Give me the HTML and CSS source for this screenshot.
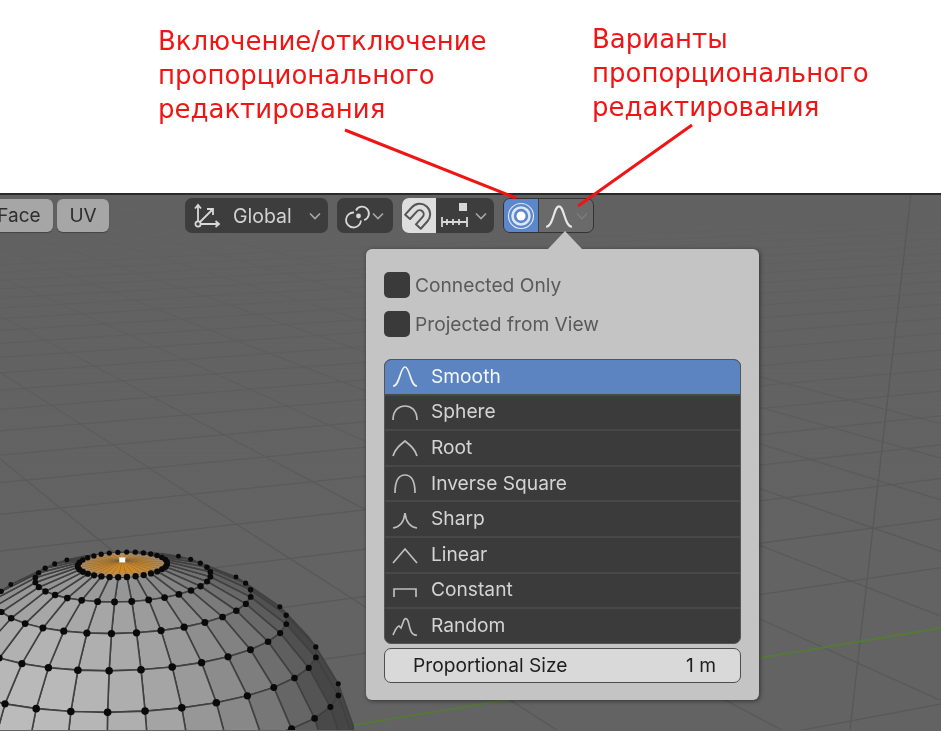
FILE: index.html
```html
<!DOCTYPE html>
<html lang="ru">
<head>
    <meta charset="UTF-8">
    <meta name="viewport" content="width=device-width, initial-scale=1.0">
    <title>Пропорциональное редактирование</title>
    <link rel="stylesheet" href="styles.css">
</head>
<body>

<div class="notes">
    <p class="note note-left">Включение/отключение<br>пропорционального<br>редактирования</p>
    <p class="note note-right">Варианты<br>пропорционального<br>редактирования</p>
</div>

<div class="viewport">
    <svg class="scene" id="scene" viewBox="0 194 941 537"></svg>

    <div class="toolbar">
        <button class="btn-light btn-face">Face</button>
        <button class="btn-light btn-uv">UV</button>

        <div class="drop drop-global">
            <svg class="ico" width="28" height="28" viewBox="0 0 28 28">
                <circle cx="5" cy="22" r="2.6"/>
                <path d="M5 19V3M2 6.500L5 3l3 3.500M8 22h18M22.500 19l3.500 3-3.500 3M7 20L20 7M14 7h6v6"/>
            </svg>
            <span class="drop-text">Global</span>
            <svg class="chev" width="12" height="8" viewBox="0 0 12 8"><path d="M1 1.500l5 5 5-5"/></svg>
        </div>

        <div class="drop drop-link">
            <svg class="ico" width="28" height="28" viewBox="0 0 28 28">
                <path d="M10 10.500a7.500 7.500 0 1 0 7 8M12 8.500a6.800 6.800 0 1 1 8 9.500"/>
                <circle class="solid" cx="14.500" cy="14" r="2.400"/>
            </svg>
            <svg class="chev" width="12" height="8" viewBox="0 0 12 8"><path d="M1 1.500l5 5 5-5"/></svg>
        </div>

        <div class="group-snap">
            <span class="snap-on">
                <svg class="ico-dark" width="30" height="30" viewBox="0 0 30 30">
                    <path transform="rotate(42 15 14)" d="M4.500 23V13a10.500 10.500 0 0 1 21 0v10h-6.500V13a4 4 0 0 0-8 0v10z"/>
                </svg>
            </span>
            <div class="snap-rest">
                <svg class="ico" width="30" height="28" viewBox="0 0 30 28">
                    <path d="M1 15v10M1 20h25M6 17v6M12 17v6M18 17v6M26 15v10"/>
                    <rect class="solid" x="18" y="1" width="8" height="8"/>
                </svg>
                <svg class="chev" width="12" height="8" viewBox="0 0 12 8"><path d="M1 1.500l5 5 5-5"/></svg>
            </div>
        </div>

        <div class="group-prop">
            <span class="prop-on">
                <svg width="30" height="30" viewBox="0 0 30 30">
                    <circle class="ring-thin" cx="15" cy="15" r="12.500"/>
                    <circle class="ring-thick" cx="15" cy="15" r="8.500"/>
                    <circle class="ring-dot" cx="15" cy="15" r="4.500"/>
                </svg>
            </span>
            <div class="prop-rest">
                <svg class="ico ico-curve" width="28" height="26" viewBox="0 0 26 24"><path d="M1 22C8 22 8 3 13 3s5 19 12 19"/></svg>
                <svg class="chev chev-dim" width="12" height="8" viewBox="0 0 12 8"><path d="M1 1.500l5 5 5-5"/></svg>
            </div>
        </div>
    </div>

    <div class="popover">
        <span class="pop-tip"></span>

        <label class="check"><span class="check-box"></span>Connected Only</label>
        <label class="check"><span class="check-box"></span>Projected from View</label>

        <ul class="falloff">
            <li class="row active"><svg width="26" height="24" viewBox="0 0 26 24"><path d="M1 22C8 22 8 3 13 3s5 19 12 19"/></svg>Smooth</li>
            <li class="row"><svg width="26" height="24" viewBox="0 0 26 24"><path d="M1 21C1 10 8 7 13 7s12 3 12 14"/></svg>Sphere</li>
            <li class="row"><svg width="26" height="24" viewBox="0 0 26 24"><path d="M1 21C3 14 8 10 13 6c5 4 10 8 12 15"/></svg>Root</li>
            <li class="row"><svg width="26" height="24" viewBox="0 0 26 24"><path d="M3 22C3 9 7 4 13 4s10 5 10 18"/></svg>Inverse Square</li>
            <li class="row"><svg width="26" height="24" viewBox="0 0 26 24"><path d="M1 22c7-1 11-6 12-15 1 9 5 14 12 15"/></svg>Sharp</li>
            <li class="row"><svg width="26" height="24" viewBox="0 0 26 24"><path d="M1 21L13 7l12 14"/></svg>Linear</li>
            <li class="row"><svg width="26" height="24" viewBox="0 0 26 24"><path d="M2 20v-8h22v8"/></svg>Constant</li>
            <li class="row"><svg width="26" height="24" viewBox="0 0 26 24"><path d="M1 22c2-4 3-8 6-9l2 2 3-8c1-2 3-2 4 1 2 6 2 15 9 14"/></svg>Random</li>
        </ul>

        <div class="size-field"><span>Proportional Size</span><span>1 m</span></div>
    </div>
</div>

<svg class="arrows" width="941" height="731" viewBox="0 0 941 731">
    <path d="M345 130L516 198M692 125L578 206"/>
</svg>

<script src="canvas.js"></script>
</body>
</html>
```

FILE: styles.css
```css
html, body {
    margin: 0;
    height: 100%;
    overflow: hidden;
    background-color: #FFFFFF;
}
body {
    display: flex;
    flex-direction: column;
    position: relative;
    filter: blur(0.4px); /* the screenshot is a soft upscale */
}

/* red captions above the viewport */
.notes {
    height: 193px;
    flex: none;
    box-sizing: border-box;
    padding: 24px 0 0 158px;
    display: flex;
    font-family: "DejaVu Sans", sans-serif;
    font-size: 26px;
    line-height: 34px;
    color: #F01414;
}
.note {
    margin: 0;
}
.note-left {
    width: 434px;
}
.note-right {
    margin-top: -2px;
}
.arrows {
    position: absolute;
    left: 0;
    top: 0;
    pointer-events: none;
}
.arrows path {
    fill: none;
    stroke: #F01414;
    stroke-width: 3;
}

/* blender viewport */
.viewport {
    flex: 1;
    position: relative;
    overflow: hidden;
    background-color: #636363;
    border-top: 2px solid #2A2A2A;
    font-family: Inter, "Liberation Sans", sans-serif;
    font-size: 19px;
}
.scene {
    position: absolute;
    left: 0;
    top: -2px;
    width: 941px;
    height: 537px;
    filter: blur(0.5px);
}

.toolbar {
    position: relative;
    display: flex;
    align-items: center;
    height: 35px;
    padding-top: 3px;
}
.btn-light {
    height: 33px;
    border: none;
    border-radius: 6px;
    background-color: #A6A6A6;
    color: #2E2E2E;
    font: inherit;
    padding: 0;
    box-shadow: 0 1px 1px rgba(0,0,0,0.3);
}
.btn-face {
    width: 68px;
    margin-left: -15px;
}
.btn-uv {
    width: 52px;
    margin-left: 4px;
    margin-right: 76px;
}
.drop, .group-snap, .group-prop {
    height: 35px;
    border-radius: 7px;
    background-color: #3D3D3D;
    color: #D2D2D2;
    display: flex;
    align-items: center;
    box-sizing: border-box;
}
.drop-global {
    width: 143px;
    padding-left: 8px;
    margin-right: 9px;
}
.drop-text {
    margin-left: 12px;
    font-size: 19.500px;
    width: 76px;
    flex: none;
}
.drop-link {
    width: 56px;
    padding-left: 7px;
    margin-right: 9px;
}
.ico, .chev, .ico-dark {
    fill: none;
    flex: none;
}
.ico {
    stroke: #D8D8D8;
    stroke-width: 1.800;
}
.ico .solid {
    fill: #D8D8D8;
    stroke: none;
}
.ico-dark {
    stroke: #555555;
    stroke-width: 2;
    stroke-linejoin: round;
}
.chev {
    stroke: #A8A8A8;
    stroke-width: 1.600;
}
.chev-dim {
    stroke: #7C7C7C;
}
.group-snap {
    width: 92px;
    margin-right: 9px;
    overflow: hidden;
}
.snap-on {
    width: 34px;
    height: 35px;
    background-color: #DEDEDE;
    display: flex;
    align-items: center;
    justify-content: center;
    flex: none;
}
.snap-rest {
    display: flex;
    align-items: center;
    gap: 4px;
    padding-left: 5px;
}
.group-prop {
    width: 91px;
    overflow: hidden;
    border: 1px solid #333333;
    background-color: #6A6A6A;
}
.prop-on {
    width: 34px;
    height: 100%;
    background-color: #5C87CB;
    display: flex;
    align-items: center;
    justify-content: center;
    flex: none;
    border-right: 1px solid #3E3E3E;
}
.ring-thin, .ring-thick {
    fill: none;
    stroke: #DCE6F6;
}
.ring-thin {
    stroke-width: 1.200;
}
.ring-thick {
    stroke-width: 2.600;
}
.ring-dot {
    fill: #FFFFFF;
}
.prop-rest {
    display: flex;
    align-items: center;
    gap: 3px;
    padding-left: 6px;
}
.ico-curve {
    stroke-width: 2;
    stroke: #E8E8E8;
}

/* popover */
.popover {
    position: absolute;
    left: 366px;
    top: 54px;
    width: 393px;
    height: 451px;
    box-sizing: border-box;
    padding: 23px 18px 0;
    background-color: #C4C4C4;
    border-radius: 6px;
    box-shadow: 1px 1px 4px rgba(0,0,0,0.5);
}
.pop-tip {
    position: absolute;
    left: 182px;
    top: -18px;
    border-left: 17px solid transparent;
    border-right: 17px solid transparent;
    border-bottom: 18px solid #C4C4C4;
}
.check {
    display: flex;
    align-items: center;
    gap: 5px;
    height: 26px;
    margin-bottom: 13px;
    color: #5A5A5A;
    font-size: 19.200px;
}
.check-box {
    width: 26px;
    height: 26px;
    border-radius: 5px;
    background-color: #3A3A3A;
}
.falloff {
    list-style: none;
    margin: 22px 0 0;
    padding: 0;
    border-radius: 7px;
    overflow: hidden;
    background-color: #3B3B3B;
    border: 1px solid #555555;
}
.row {
    box-sizing: border-box;
    height: 35.600px;
    padding: 0 0 2px 7px;
    display: flex;
    align-items: center;
    gap: 13px;
    color: #D4D4D4;
    font-size: 19.200px;
    border-top: 2px solid #484848;
}
.row svg {
    fill: none;
    stroke: #BEBEBE;
    stroke-width: 1.700;
    flex: none;
}
.row.active {
    height: 33.600px;
    background-color: #5B84C1;
    color: #F4F7FC;
    border-top: none;
}
.row.active svg {
    stroke: #F0F0F0;
}
.size-field {
    margin-top: 4px;
    height: 33px;
    display: flex;
    align-items: center;
    justify-content: space-between;
    padding: 0 24px 0 28px;
    border: 1px solid #4E4E4E;
    border-radius: 7px;
    background-color: #D9D9D9;
    color: #1E1E1E;
    font-size: 19.200px;
}
```

FILE: canvas.js
```js
// ground grid and the uv sphere of the viewport, drawn into the svg
const scene = document.getElementById('scene');
const NS = 'http://www.w3.org/2000/svg';

function add(tag, attrs) {
    const el = document.createElementNS(NS, tag);
    for (const key in attrs) el.setAttribute(key, attrs[key]);
    scene.appendChild(el);
    return el;
}

function lineThrough(vx, vy, x, y, color) {
    // long line from the vanishing point through x,y
    const ex = x + (x - vx) * 3;
    const ey = y + (y - vy) * 3;
    add('line', { x1: vx, y1: vy, x2: ex, y2: ey, stroke: color, 'stroke-width': 1.3 });
}

function drawGrid() {
    const grid = '#595959';
    // lines running to the right
    for (let k = -2; k < 22; k++) {
        if (k === 0) continue;
        lineThrough(4400, 55, 760, 55 + 1 / (0.001656 + 0.000194 * k), grid);
    }
    // lines running to the lower right
    for (let k = -8; k < 6; k++) {
        lineThrough(-495, 55, 760 + 188 * k, 620, grid);
    }

    // the grid fades out towards the horizon
    const defs = add('defs', {});
    const fade = document.createElementNS(NS, 'linearGradient');
    fade.id = 'fade';
    fade.setAttribute('x1', 0);
    fade.setAttribute('y1', 0);
    fade.setAttribute('x2', 0);
    fade.setAttribute('y2', 1);
    fade.innerHTML = '<stop offset="0" stop-color="#616161" stop-opacity="0.95"/><stop offset="1" stop-color="#636363" stop-opacity="0"/>';
    defs.appendChild(fade);
    add('rect', { x: 0, y: 194, width: 941, height: 340, fill: 'url(#fade)' });

    add('line', { x1: 911, y1: 194, x2: 850, y2: 731, stroke: '#585858', 'stroke-width': 1.3 });
    add('line', { x1: 300, y1: 735, x2: 941, y2: 629, stroke: '#557A38', 'stroke-width': 1.8 });
}

function drawSphere() {
    const R = 230, cx = 130, cy = 782;
    const sinT = 0.28, cosT = 0.96;
    const rollS = 0.035, rollC = 0.999; // the pole leans a little to the left
    const rings = 16, segs = 32;
    const off = 6 * Math.PI / 180;

    function vert(i, j) {
        const th = i * Math.PI / rings;
        const ph = j * 2 * Math.PI / segs + off;
        const nx = Math.sin(th) * Math.cos(ph);
        const ny = Math.cos(th);
        const nz = Math.sin(th) * Math.sin(ph);
        const up = ny * cosT - nz * sinT;
        const view = ny * sinT + nz * cosT;
        return {
            x: cx + R * (nx * rollC - up * rollS),
            y: cy - R * (up * rollC + nx * rollS),
            nx: nx, up: up, view: view
        };
    }

    const L = [-0.45, 0.25, 0.86];
    for (let i = 0; i < 8; i++) {
        for (let j = 0; j < segs; j++) {
            const a = vert(i, j), b = vert(i, j + 1), c = vert(i + 1, j + 1), d = vert(i + 1, j);
            const nx = (a.nx + b.nx + c.nx + d.nx) / 4;
            const up = (a.up + b.up + c.up + d.up) / 4;
            const view = (a.view + b.view + c.view + d.view) / 4;
            if (view < 0) continue;
            const lit = Math.max(0, nx * L[0] + up * L[1] + view * L[2]);
            const g = Math.round(70 + 118 * lit);
            add('path', {
                d: `M${a.x} ${a.y}L${b.x} ${b.y}L${c.x} ${c.y}L${d.x} ${d.y}Z`,
                fill: `rgb(${g},${g},${g})`,
                stroke: '#404040',
                'stroke-width': 1.6
            });
        }
    }

    // orange falloff around the selected pole, the edges still show through it
    const defs = scene.querySelector('defs');
    const grad = document.createElementNS(NS, 'radialGradient');
    grad.id = 'falloff';
    grad.innerHTML = '<stop offset="0" stop-color="#D98A1E"/><stop offset="0.6" stop-color="#C98A32"/><stop offset="1" stop-color="#A88F6E"/>';
    defs.appendChild(grad);
    const pole = vert(0, 0);
    add('ellipse', { cx: pole.x, cy: 566, rx: 44, ry: 12, fill: 'url(#falloff)' });
    for (let j = 0; j < segs; j++) {
        const v = vert(1, j);
        add('line', { x1: pole.x, y1: pole.y, x2: v.x, y2: v.y, stroke: '#5A5040', 'stroke-opacity': 0.35, 'stroke-width': 1 });
    }

    for (let i = 1; i < 8; i++) {
        for (let j = 0; j < segs; j++) {
            const v = vert(i, j);
            if (v.view < -0.03) continue;
            const r = Math.max(2.4, Math.min(3.8, 2.5 + 1.5 * v.view));
            add('circle', { cx: v.x, cy: v.y, r: r, fill: '#0A0A0A' });
        }
    }
    add('rect', { x: pole.x - 3, y: pole.y - 3, width: 6, height: 5, fill: '#FFFFFF' });
}

drawGrid();
drawSphere();
```
